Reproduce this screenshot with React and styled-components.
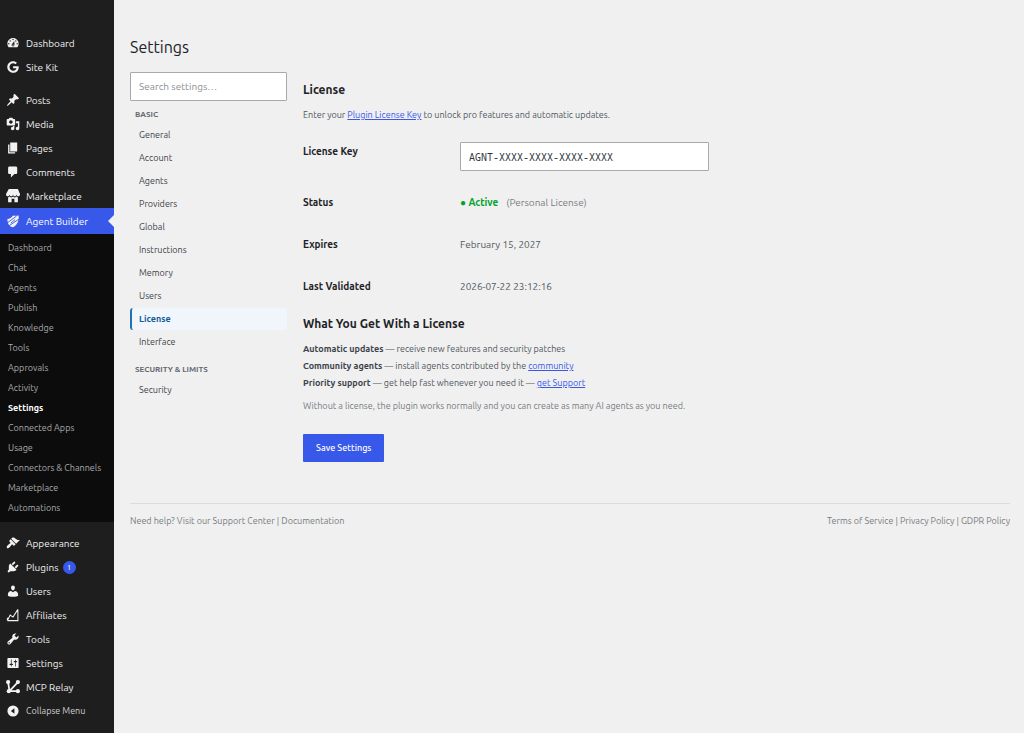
import styled, { createGlobalStyle, css } from "styled-components";
import { FaGoogle } from "react-icons/fa";

const colors = {
    page: "#f0f0f0",
    menu: "#1e1e1e",
    submenu: "#0c0c0c",
    blue: "#3858e9",
    heading: "#1d2327",
    strong: "#3c434a",
    text: "#50575e",
    muted: "#787c82",
    border: "#a7aaad",
};

const GlobalStyle = createGlobalStyle`
    * {
        box-sizing: border-box;
    }

    body {
        margin: 0;
        background: ${colors.page};
        color: ${colors.text};
        font-family: Ubuntu, "Noto Sans", "Open Sans", sans-serif;
        font-size: 9px;
        line-height: 17px;
    }

    h1, h2, p, ul {
        margin: 0;
        padding: 0;
    }

    ul {
        list-style: none;
    }

    strong {
        color: ${colors.strong};
    }

    input, button {
        font-family: inherit;
    }
`

const Page = styled.div`
    display: flex;
    min-height: 100vh;
`

/* admin menu */
const Menu = styled.nav`
    flex: none;
    width: 114px;
    padding-top: 31px;
    background: ${colors.menu};
`

const MenuGroup = styled.ul`
    & + & {
        margin-top: 9px;
    }
`

const MenuLink = styled.a`
    position: relative;
    display: flex;
    align-items: center;
    height: ${p => p.$current ? "26px" : "24px"};
    padding-left: 6px;
    color: ${p => p.$current ? "#fff" : "#f0f0f1"};
    background: ${p => p.$current ? colors.blue : "transparent"};
    font-size: 10px;
    text-decoration: none;

    ${p => p.$current && css`
        &::after {
            content: "";
            position: absolute;
            right: 0;
            top: 7px;
            border: 6px solid transparent;
            border-left: 0;
            border-right-color: ${colors.page};
        }
    `}
`

const Icon = styled.svg`
    flex: none;
    width: 14px;
    height: 14px;
    margin-right: 6px;
    fill: #f3f1f1;
    color: #f3f1f1;
`

const GoogleIcon = styled(Icon)`
    padding: 1px;
`

const Badge = styled.span`
    width: 13px;
    height: 13px;
    margin-left: 4px;
    border-radius: 50%;
    background: ${colors.blue};
    color: #fff;
    font-size: 8px;
    line-height: 13px;
    text-align: center;
`

const Submenu = styled.ul`
    padding: 4px 0;
    background: ${colors.submenu};
`

const SubmenuLink = styled.a`
    display: block;
    padding-left: 8px;
    color: ${p => p.$current ? "#fff" : "#a9aaac"};
    font-weight: ${p => p.$current ? 700 : 400};
    line-height: 20px;
    text-decoration: none;
    white-space: nowrap;
`

const Collapse = styled.button`
    display: flex;
    align-items: center;
    width: 100%;
    height: 24px;
    padding: 0 0 0 6px;
    border: 0;
    background: none;
    color: #d0d1d2;
    font-size: 9px;
`

/* settings */
const Main = styled.main`
    flex: 1;
    padding: 35px 14px 0 16px;
`

const Title = styled.h1`
    margin-bottom: 13px;
    color: ${colors.heading};
    font-size: 16px;
    font-weight: 400;
    line-height: 24px;
`

const Columns = styled.div`
    display: grid;
    grid-template-columns: 157px 1fr;
    gap: 16px;
`

const Field = styled.input`
    display: block;
    width: 100%;
    max-width: 249px;
    height: 29px;
    padding: 0 8px;
    border: 1px solid ${colors.border};
    border-radius: 1px;
    background: #fff;
    color: #2c3338;
    font-size: 10px;

    &::placeholder {
        color: #8c8f94;
    }
`

const KeyField = styled(Field)`
    font-family: "Noto Sans Mono", "DejaVu Sans Mono", monospace;
`

const TabHeading = styled.h2`
    margin: ${p => p.$first ? "8px" : "11px"} 0 3px;
    padding-left: 5px;
    color: #646970;
    font-size: 8px;
    font-weight: 700;
    line-height: 12px;
    text-transform: uppercase;
`

const TabList = styled.ul`
    display: grid;
    gap: 1px;
`

const Tab = styled.a`
    display: block;
    padding-left: 7px;
    border-left: 2px solid ${p => p.$current ? "#2271b1" : "transparent"};
    border-radius: 3px;
    background: ${p => p.$current ? "#f0f6fc" : "transparent"};
    color: ${p => p.$current ? "#135e96" : colors.strong};
    font-weight: ${p => p.$current ? 700 : 400};
    line-height: 22px;
    text-decoration: none;
`

const Form = styled.form`
    padding-top: 10px;
`

const SectionTitle = styled.h2`
    margin-bottom: 9px;
    color: ${colors.heading};
    font-size: 12px;
    font-weight: 700;
    line-height: 16px;
`

const Rows = styled.div`
    margin: 7px 0 8px;
`

const Row = styled.div`
    display: grid;
    grid-template-columns: 157px 1fr;
    padding: 11px 0;
    font-size: 10px;
    line-height: 20px;
`

const RowLabel = styled.label`
    color: ${colors.heading};
    font-weight: 700;
`

const Status = styled.strong`
    margin-right: 8px;
    color: #00a32a;
`

const Plan = styled.span`
    color: ${colors.muted};
`

const Link = styled.a`
    color: ${colors.blue};
`

const Note = styled.p`
    margin-top: 6px;
    color: ${colors.muted};
`

const Save = styled.button`
    height: 28px;
    margin-top: 19px;
    padding: 0 13px;
    border: 0;
    border-radius: 1px;
    background: ${colors.blue};
    color: #fff;
    font-size: 9px;
    font-weight: 500;
`

const Footer = styled.footer`
    display: flex;
    justify-content: space-between;
    margin-top: 41px;
    padding-top: 9px;
    border-top: 1px solid #dcdcde;
    color: ${colors.muted};

    a {
        color: inherit;
        text-decoration: none;
    }
`

const icons = {
    dashboard: <path d="M3.76 16h12.48c1.1-1.37 1.76-3.11 1.76-5 0-4.42-3.58-8-8-8s-8 3.58-8 8c0 1.89.66 3.63 1.76 5zM10 4c.55 0 1 .45 1 1s-.45 1-1 1-1-.45-1-1 .45-1 1-1zM6 6c.55 0 1 .45 1 1s-.45 1-1 1-1-.45-1-1 .45-1 1-1zm8 0c.55 0 1 .45 1 1s-.45 1-1 1-1-.45-1-1 .45-1 1-1zm-5.37 5.55L12 7v6c0 1.1-.9 2-2 2s-2-.9-2-2c0-.57.24-1.08.63-1.45zM4 10c.55 0 1 .45 1 1s-.45 1-1 1-1-.45-1-1 .45-1 1-1zm12 0c.55 0 1 .45 1 1s-.45 1-1 1-1-.45-1-1 .45-1 1-1zm-5 3c0-.55-.45-1-1-1s-1 .45-1 1 .45 1 1 1 1-.45 1-1z" />,
    posts: <path d="M10.44 3.02l1.82-1.82 6.36 6.35-1.83 1.82c-1.05-.68-2.48-.57-3.41.36l-.75.75c-.92.93-1.04 2.35-.35 3.41l-1.83 1.82-2.41-2.41-2.8 2.79c-.42.42-3.38 2.71-3.8 2.29s1.86-3.39 2.28-3.81l2.79-2.79L4.1 9.36l1.83-1.82c1.05.69 2.48.57 3.4-.36l.75-.75c.93-.92 1.05-2.35.36-3.41z" />,
    media: <path d="M13 11V4c0-.55-.45-1-1-1h-1.67L9 1H5L3.67 3H2c-.55 0-1 .45-1 1v7c0 .55.45 1 1 1h10c.55 0 1-.45 1-1zM7 4.5c1.38 0 2.5 1.12 2.5 2.5S8.38 9.5 7 9.5 4.5 8.38 4.5 7 5.62 4.5 7 4.5zM14 6h5v10.5c0 1.38-1.12 2.5-2.5 2.5S14 17.88 14 16.5s1.12-2.5 2.5-2.5c.17 0 .34.02.5.05V9h-3V6zm-4 8.05V13h2v3.5c0 1.38-1.12 2.5-2.5 2.5S7 17.88 7 16.5 8.12 14 9.5 14c.17 0 .34.02.5.05z" />,
    pages: <path d="M6 15V2h10v13H6zm-1 1h8v2H3V5h2v11z" />,
    comments: <path d="M5 2h9c1.1 0 2 .9 2 2v7c0 1.1-.9 2-2 2h-2l-5 5v-5H5c-1.1 0-2-.9-2-2V4c0-1.1.9-2 2-2z" />,
    store: <path d="M1 10c.41.29.96.43 1.5.43.55 0 1.09-.14 1.5-.43.62-.46 1-1.17 1-2 0 .83.37 1.54 1 2 .41.29.96.43 1.5.43.55 0 1.09-.14 1.5-.43.62-.46 1-1.17 1-2 0 .83.37 1.54 1 2 .41.29.96.43 1.51.43.54 0 1.08-.14 1.49-.43.62-.46 1-1.17 1-2 0 .83.37 1.54 1 2 .41.29.96.43 1.5.43.55 0 1.09-.14 1.5-.43.63-.46 1-1.17 1-2V7l-3-7H4L0 7v1c0 .83.37 1.54 1 2zm2 8.99h5v-5h4v5h5v-7c-.37-.05-.72-.22-1-.43-.63-.45-1-.73-1-1.56 0 .83-.38 1.11-1 1.56-.41.3-.95.43-1.49.44-.55 0-1.1-.14-1.51-.44-.63-.45-1-.73-1-1.56 0 .83-.38 1.11-1 1.56-.41.3-.95.43-1.5.44-.54 0-1.09-.14-1.5-.44-.63-.45-1-.73-1-1.57 0 .84-.38 1.12-1 1.57-.29.21-.63.38-1 .44v6.99z" />,
    agent: (
        <>
            <path d="M10 2c3 1 5 0 8 0 1 6-1 13-8 17-5-1-8-5-8-12 3 0 6-2 8-5z" />
            <path d="M0 14L15 3M4 17L19 7M7 13l6-5" fill="none" stroke={colors.blue} strokeWidth="1.3" />
        </>
    ),
    appearance: <path d="M14.48 11.06L7.41 3.99l1.5-1.5c.5-.56 2.3-.47 3.51.32 1.21.8 1.43 1.28 2.91 2.1 1.18.64 2.45 1.26 4.45.85zm-.71.71L6.7 4.7 4.93 6.47c-.39.39-.39 1.02 0 1.41l1.06 1.06c.39.39.39 1.03 0 1.42-.6.6-1.43 1.11-2.21 1.69-.35.26-.7.53-1.01.84C1.43 14.23.4 16.08 1.4 17.07c.99 1 2.84-.03 4.18-1.36.31-.31.58-.66.85-1.02.57-.78 1.08-1.61 1.69-2.21.39-.39 1.02-.39 1.41 0l1.06 1.06c.39.39 1.02.39 1.41 0z" />,
    plugins: <path d="M13.11 4.36L9.87 7.6 8 5.73l3.24-3.24c.35-.34 1.05-.2 1.56.32.52.51.66 1.21.31 1.55zm-8 1.77l.91-1.12 9.01 9.01-1.19.84c-.71.71-2.63 1.16-3.82 1.16H6.14L4.9 17.26c-.59.59-1.54.59-2.12 0-.59-.58-.59-1.53 0-2.12l1.24-1.24v-3.88c0-1.13.4-3.19 1.09-3.89zm7.26 3.97l3.24-3.24c.34-.35 1.04-.21 1.55.31.52.51.66 1.21.31 1.55l-3.24 3.25z" />,
    users: <path d="M10 9.25c-2.27 0-2.73-3.44-2.73-3.44C7 4.02 7.82 2 9.97 2c2.16 0 2.98 2.02 2.71 3.81 0 0-.41 3.44-2.68 3.44zm0 2.57L12.72 10c2.39 0 4.52 2.33 4.52 4.53v2.49s-3.65 1.13-7.24 1.13c-3.65 0-7.24-1.13-7.24-1.13v-2.49c0-2.25 1.94-4.48 4.47-4.48z" />,
    chart: <path d="M2 18h15V2M2 18l4-8 4 3 7-11M2 18v-4" fill="none" stroke="currentColor" strokeWidth="1.5" />,
    tools: <path d="M16.68 9.77c-1.34 1.34-3.3 1.67-4.95.99l-5.41 6.52c-.99.99-2.59.99-3.58 0s-.99-2.59 0-3.57l6.52-5.42c-.68-1.65-.35-3.61.99-4.95 1.28-1.28 3.12-1.62 4.72-1.06l-2.89 2.89 2.82 2.82 2.86-2.87c.53 1.58.18 3.39-1.08 4.65zM3.81 16.21c.4.39 1.04.39 1.43 0 .4-.4.4-1.04 0-1.43-.39-.4-1.03-.4-1.43 0-.39.39-.39 1.03 0 1.43z" />,
    settings: <path d="M18 16V4c0-.55-.45-1-1-1H3c-.55 0-1 .45-1 1v12c0 .55.45 1 1 1h14c.55 0 1-.45 1-1zM8 11h1c.55 0 1 .45 1 1s-.45 1-1 1H8v1.5c0 .28-.22.5-.5.5s-.5-.22-.5-.5V13H6c-.55 0-1-.45-1-1s.45-1 1-1h1V5.5c0-.28.22-.5.5-.5s.5.22.5.5V11zm5-2h-1c-.55 0-1-.45-1-1s.45-1 1-1h1V5.5c0-.28.22-.5.5-.5s.5.22.5.5V7h1c.55 0 1 .45 1 1s-.45 1-1 1h-1v5.5c0 .28-.22.5-.5.5s-.5-.22-.5-.5V9z" />,
    relay: (
        <>
            <path d="M3 3l2 13h12M5 16L17 3" fill="none" stroke="currentColor" strokeWidth="2.5" />
            <circle cx="3" cy="3" r="3" />
            <circle cx="17" cy="3" r="3" />
            <circle cx="4" cy="16" r="3" />
            <circle cx="17" cy="16" r="3" />
        </>
    ),
    collapse: <path fillRule="evenodd" d="M10 2a8 8 0 1 1 0 16 8 8 0 0 1 0-16zM12 6v8l-5-4z" />,
}

const siteMenu = [
    { icon: "dashboard", label: "Dashboard" },
    { icon: "google", label: "Site Kit" },
]

const contentMenu = [
    { icon: "posts", label: "Posts" },
    { icon: "media", label: "Media" },
    { icon: "pages", label: "Pages" },
    { icon: "comments", label: "Comments" },
    { icon: "store", label: "Marketplace" },
    {
        icon: "agent",
        label: "Agent Builder",
        current: true,
        items: [
            "Dashboard", "Chat", "Agents", "Publish", "Knowledge", "Tools", "Approvals", "Activity",
            "Settings", "Connected Apps", "Usage", "Connectors & Channels", "Marketplace", "Automations",
        ],
    },
]

const adminMenu = [
    { icon: "appearance", label: "Appearance" },
    { icon: "plugins", label: "Plugins", count: 1 },
    { icon: "users", label: "Users" },
    { icon: "chart", label: "Affiliates" },
    { icon: "tools", label: "Tools" },
    { icon: "settings", label: "Settings" },
    { icon: "relay", label: "MCP Relay" },
]

const basicTabs = [
    "General", "Account", "Agents", "Providers", "Global", "Instructions", "Memory", "Users", "License", "Interface",
]

function MenuIcon({ name }) {
    if (name === "google") return <GoogleIcon as={FaGoogle} aria-hidden="true" />
    return <Icon viewBox="0 0 20 20" aria-hidden="true">{icons[name]}</Icon>
}

function MenuSection({ entries }) {
    return (
        <MenuGroup>
            {entries.map(entry => (
                <li key={entry.label}>
                    <MenuLink href="#" $current={entry.current}>
                        <MenuIcon name={entry.icon} />
                        {entry.label}
                        {entry.count && <Badge>{entry.count}</Badge>}
                    </MenuLink>
                    {entry.items && (
                        <Submenu>
                            {entry.items.map(item => (
                                <li key={item}>
                                    <SubmenuLink href="#" $current={item === "Settings"}>{item}</SubmenuLink>
                                </li>
                            ))}
                        </Submenu>
                    )}
                </li>
            ))}
        </MenuGroup>
    )
}

function Tabs({ tabs }) {
    return (
        <TabList>
            {tabs.map(tab => (
                <li key={tab}>
                    <Tab href="#" $current={tab === "License"}>{tab}</Tab>
                </li>
            ))}
        </TabList>
    )
}

function App() {
    return (
        <Page>
            <GlobalStyle />
            <Menu>
                <MenuSection entries={siteMenu} />
                <MenuSection entries={contentMenu} />
                <MenuSection entries={adminMenu} />
                <Collapse type="button">
                    <MenuIcon name="collapse" />
                    Collapse Menu
                </Collapse>
            </Menu>

            <Main>
                <Title>Settings</Title>
                <Columns>
                    <nav>
                        <Field type="search" placeholder="Search settings…" aria-label="Search settings" />
                        <TabHeading $first>Basic</TabHeading>
                        <Tabs tabs={basicTabs} />
                        <TabHeading>Security &amp; Limits</TabHeading>
                        <Tabs tabs={["Security"]} />
                    </nav>

                    <Form onSubmit={e => e.preventDefault()}>
                        <SectionTitle>License</SectionTitle>
                        <p>
                            Enter your <Link href="#">Plugin License Key</Link> to unlock pro features and automatic updates.
                        </p>
                        <Rows>
                            <Row>
                                <RowLabel htmlFor="license-key">License Key</RowLabel>
                                <KeyField id="license-key" type="text" defaultValue="AGNT-XXXX-XXXX-XXXX-XXXX" />
                            </Row>
                            <Row>
                                <RowLabel as="span">Status</RowLabel>
                                <span><Status>● Active</Status><Plan>(Personal License)</Plan></span>
                            </Row>
                            <Row>
                                <RowLabel as="span">Expires</RowLabel>
                                <span>February 15, 2027</span>
                            </Row>
                            <Row>
                                <RowLabel as="span">Last Validated</RowLabel>
                                <span>2026-07-22 23:12:16</span>
                            </Row>
                        </Rows>

                        <SectionTitle>What You Get With a License</SectionTitle>
                        <ul>
                            <li><strong>Automatic updates</strong> — receive new features and security patches</li>
                            <li><strong>Community agents</strong> — install agents contributed by the <Link href="#">community</Link></li>
                            <li><strong>Priority support</strong> — get help fast whenever you need it — <Link href="#">get Support</Link></li>
                        </ul>
                        <Note>Without a license, the plugin works normally and you can create as many AI agents as you need.</Note>
                        <Save type="submit">Save Settings</Save>
                    </Form>
                </Columns>

                <Footer>
                    <span>Need help? Visit our <a href="#">Support Center</a> | <a href="#">Documentation</a></span>
                    <span><a href="#">Terms of Service</a> | <a href="#">Privacy Policy</a> | <a href="#">GDPR Policy</a></span>
                </Footer>
            </Main>
        </Page>
    )
}

export default App;
